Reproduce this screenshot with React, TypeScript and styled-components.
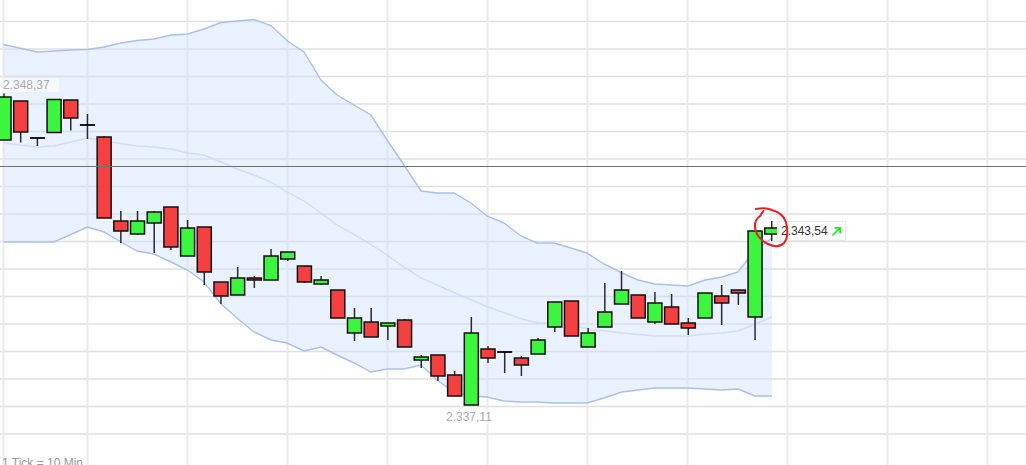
import { createGlobalStyle, styled } from "styled-components";

const GlobalStyle = createGlobalStyle`
  html, body {
    margin: 0;
    padding: 0;
    background: #fff;
    font-family: "Liberation Sans", Arial, sans-serif;
  }
`;

const ChartFrame = styled.main`
  position: relative;
  width: 1026px;
  height: 465px;
  overflow: hidden;
  background: #fff;
`;

const ChartSvg = styled.svg`
  display: block;
  width: 1026px;
  height: 465px;
`;

const HLine = styled.line`
  stroke: #e0e0e0;
  stroke-width: 1.3;
`;

const VLine = styled.line`
  stroke: #ebebeb;
  stroke-width: 2;
`;

const LastLine = styled.line`
  stroke: #6e6e6e;
  stroke-width: 1.2;
`;

const BandFill = styled.polygon`
  fill: #cfdfff;
  fill-opacity: 0.43;
`;

const BandEdge = styled.polyline`
  fill: none;
  stroke: #a9c1ec;
  stroke-width: 1.4;
`;

const BandMiddle = styled.polyline`
  fill: none;
  stroke: #cddffb;
  stroke-width: 1.4;
`;

const Wick = styled.line`
  stroke: #2b2b2b;
  stroke-width: 1.5;
`;

const Body = styled.rect<{ $up: boolean }>`
  fill: ${({ $up }) => ($up ? "#3cf53f" : "#f44040")};
  stroke: #111;
  stroke-width: 1.5;
`;

const Doji = styled.line`
  stroke: #000;
  stroke-width: 1.8;
`;

const PriceNote = styled.span<{ $left: number; $top: number }>`
  position: absolute;
  left: ${({ $left }) => $left}px;
  top: ${({ $top }) => $top}px;
  padding-right: 9px;
  font-size: 12px;
  line-height: 14px;
  color: #ababab;
  background: rgba(255, 255, 255, 0.55);
`;

const LastPriceTag = styled.div`
  position: absolute;
  left: 777px;
  top: 221px;
  width: 69px;
  height: 20px;
  box-sizing: border-box;
  display: flex;
  align-items: center;
  gap: 3px;
  padding-left: 3px;
  font-size: 12px;
  color: #333;
  background: rgba(255, 255, 255, 0.92);
  border: 1px solid #e8e8e8;
`;

const TickNote = styled.div`
  position: absolute;
  left: 2px;
  top: 456px;
  font-size: 12px;
  line-height: 14px;
  color: #999;
`;

const HandMark = styled.svg`
  position: absolute;
  left: 750px;
  top: 204px;
  width: 42px;
  height: 48px;
`;

const hLines = [21.5, 49, 76.5, 104, 131.5, 159, 186.5, 214, 241.5, 269, 296.5, 324, 351.5, 379, 406.5, 434];
const vLines = [3.5, 87.5, 187.5, 287.5, 387.5, 487.5, 587.5, 687.5, 787.5, 887.5, 987.5];

const upper: [number, number][] = [
  [3.5, 44.5], [37, 52], [54, 51], [70, 50], [87.5, 49.5], [104, 47], [121, 43], [137, 40.5], [154, 39], [171, 35],
  [187.5, 34], [204, 29], [221, 22.5], [237.5, 21], [254, 19.5], [271, 25.5], [287.5, 41], [304, 52], [321, 80],
  [337, 95], [371, 115], [387, 140], [404, 165], [421, 191], [437, 193], [454, 193], [471, 203], [487, 216],
  [504, 223], [521, 236], [537, 243], [554, 243], [571, 248], [587, 253], [604, 264], [622, 273], [638, 280],
  [655, 284], [672, 285], [688, 286], [705, 280], [722, 277], [738, 272], [755, 250], [772, 238],
];

const lower: [number, number][] = [
  [3.5, 242], [54, 242], [87.5, 227], [104, 232], [121, 242], [137, 251], [154, 254], [171, 262], [187.5, 270],
  [204, 282], [221, 304], [237, 318], [254, 332], [271, 340], [287, 343], [304, 351], [321, 347], [337, 355],
  [354, 363], [371, 372], [387, 369], [404, 369], [421, 365], [437, 380], [454, 392], [471, 396], [487, 397],
  [504, 401], [521, 402], [537, 402], [554, 403], [571, 403], [587, 403], [604, 398], [622, 392], [638, 390],
  [655, 388], [688, 388], [705, 389], [722, 390], [738, 389], [755, 396], [772, 396],
];

const middle: [number, number][] = [
  [3.5, 143], [37, 147], [54, 146], [87.5, 138], [104, 141], [137, 146], [154, 147], [171, 149], [187.5, 153],
  [204, 155], [221, 162], [237, 169], [254, 175], [271, 182], [287, 192], [304, 201], [321, 213], [337, 225],
  [367, 242], [387, 255], [404, 267], [421, 278], [455, 293], [488, 307], [505, 313], [522, 319], [538, 323],
  [554, 323], [571, 325], [588, 329], [622, 333], [655, 336], [688, 336], [705, 334], [722, 333], [738, 331],
  [755, 324], [772, 317],
];

// wick top, wick bottom, body top, body bottom
type Candle = [number, number, number, number];

const candles: Candle[] = [
  [93.5, 140, 97, 140],
  [101, 142.5, 101, 132],
  [138, 146, 138, 138],
  [99.5, 132.5, 99.5, 132.5],
  [100, 130.5, 100, 118],
  [114, 139, 125, 125],
  [136, 218, 137, 218],
  [211, 243, 221, 231],
  [211, 235, 221, 234],
  [211, 253, 212, 223],
  [207, 250, 207, 247],
  [220, 256, 228, 256],
  [227, 285, 227, 272],
  [282, 304, 282, 296],
  [267, 295, 278, 295],
  [276, 288, 278, 280],
  [249, 280, 256, 280],
  [252, 261, 252, 259],
  [266, 283, 266, 282],
  [276, 285, 280, 284],
  [290, 318, 290, 318],
  [308, 341, 318, 333],
  [308, 337, 322, 337],
  [323, 340, 323, 326],
  [319, 347, 320, 347],
  [355, 368, 357, 360],
  [355, 381, 355, 376],
  [371, 396, 375, 396],
  [317, 405, 333, 405],
  [346, 363, 349, 358],
  [352, 373, 352, 352],
  [356, 376, 358, 365],
  [338, 354, 340, 354],
  [302, 332, 302, 327],
  [301, 336, 301, 336],
  [328, 347, 333, 347],
  [283, 327, 312, 327],
  [271, 304, 290, 304],
  [295, 318, 295, 318],
  [292, 324, 303, 322],
  [294, 324, 307, 324],
  [318, 335, 323, 328],
  [293, 318, 293, 318],
  [285, 325, 296, 303],
  [290, 305, 290, 293],
  [231, 340, 231, 317],
  [221, 241, 228, 234],
];

const rising = new Set([0, 3, 8, 9, 11, 14, 16, 17, 19, 21, 23, 25, 28, 32, 33, 35, 36, 37, 39, 42, 45, 46]);

const toPoints = (line: [number, number][]) => line.map(([x, y]) => `${x},${y}`).join(" ");

const App = () => {
  return (
    <>
      <GlobalStyle />
      <ChartFrame>
        <ChartSvg viewBox="0 0 1026 465">
          {hLines.map((y) => (
            <HLine key={y} x1={0} x2={1026} y1={y} y2={y} />
          ))}
          {vLines.map((x) => (
            <VLine key={x} x1={x} x2={x} y1={0} y2={465} />
          ))}
          <BandFill points={toPoints([...upper, ...[...lower].reverse()])} />
          <BandEdge points={toPoints(upper)} />
          <BandEdge points={toPoints(lower)} />
          <BandMiddle points={toPoints(middle)} />
          {candles.map(([wickTop, wickBottom, top, bottom], i) => {
            const cx = 4 + i * 16.69;
            return (
              <g key={i}>
                <Wick x1={cx} x2={cx} y1={wickTop} y2={wickBottom} />
                {top === bottom ? (
                  <Doji x1={cx - 7.5} x2={cx + 7.5} y1={top} y2={top} />
                ) : (
                  <Body $up={rising.has(i)} x={cx - 7} y={top} width={14} height={bottom - top} />
                )}
              </g>
            );
          })}
          <LastLine x1={0} x2={1026} y1={166.5} y2={166.5} />
        </ChartSvg>
        <PriceNote $left={3} $top={78}>2.348,37</PriceNote>
        <PriceNote $left={446} $top={410}>2.337,11</PriceNote>
        <LastPriceTag>
          2.343,54
          <svg width="11" height="11" viewBox="0 0 11 11" fill="none" stroke="#14f014" strokeWidth="1.7">
            <path d="M1.5 9.5 L9 2 M3.5 1.8 H9.2 V7.5" />
          </svg>
        </LastPriceTag>
        <TickNote>1 Tick = 10 Min</TickNote>
        <HandMark viewBox="750 204 42 48" fill="none" stroke="#ea2027" strokeWidth="2.1" strokeLinecap="round">
          <path d="M756 209 C762 208 768 208 772 210 C779 212 784 216 786 222 C788 230 788 238 784 243 C780 247 774 247 768 244 C762 241 757 236 755.5 230 C754 224 756 219 760 216 C761.5 214 762.5 212 763.5 211" />
        </HandMark>
      </ChartFrame>
    </>
  );
};

export default App;
